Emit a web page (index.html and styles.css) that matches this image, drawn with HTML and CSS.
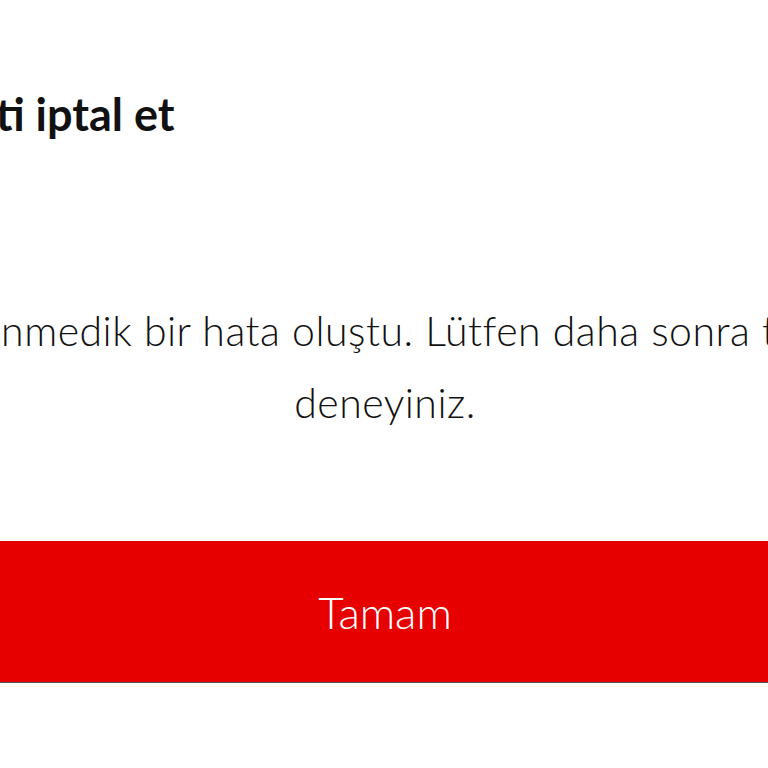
FILE: index.html
```html
<!DOCTYPE html>
<html lang="tr">
<head>
    <meta charset="UTF-8">
    <meta name="viewport" content="width=device-width, initial-scale=1.0">
    <title>Talimati iptal et</title>
    <link rel="stylesheet" href="styles.css">
</head>
<body>
    <div class="dialog">
        <h1 class="dialog-title">Talimati iptal et</h1>

        <p class="dialog-message">Beklenmedik bir hata oluştu. Lütfen daha sonra tekrar deneyiniz.</p>

        <div class="dialog-actions">
            <button class="btn-ok">Tamam</button>
        </div>
    </div>
</body>
</html>
```

FILE: styles.css
```css
html, body {
    margin: 0;
    padding: 0;
    overflow: hidden;
    background: #fff;
}
.dialog {
    width: 1200px;
    margin-left: -215px;
    font-family: Lato, "Open Sans", sans-serif;
    color: #111;
}
.dialog-title {
    margin: 0;
    padding-top: 86px;
    padding-left: 215px;
    font-size: 45px;
    font-weight: 700;
    line-height: 56px;
    text-indent: -132px;
    white-space: nowrap;
}
.dialog-message {
    width: 1000px;
    margin: 153px auto 0;
    font-size: 41px;
    font-weight: 300;
    letter-spacing: 0.5px;
    line-height: 72px;
    text-align: center;
}
.dialog-actions {
    margin-top: 102px;
}
.btn-ok {
    display: block;
    width: 100%;
    height: 142px;
    border: none;
    border-bottom: 1px solid #555;
    background-color: #e60000;
    color: #fff;
    font-family: Lato, "Open Sans", sans-serif;
    font-size: 44px;
    font-weight: 300;
    cursor: pointer;
}
```
